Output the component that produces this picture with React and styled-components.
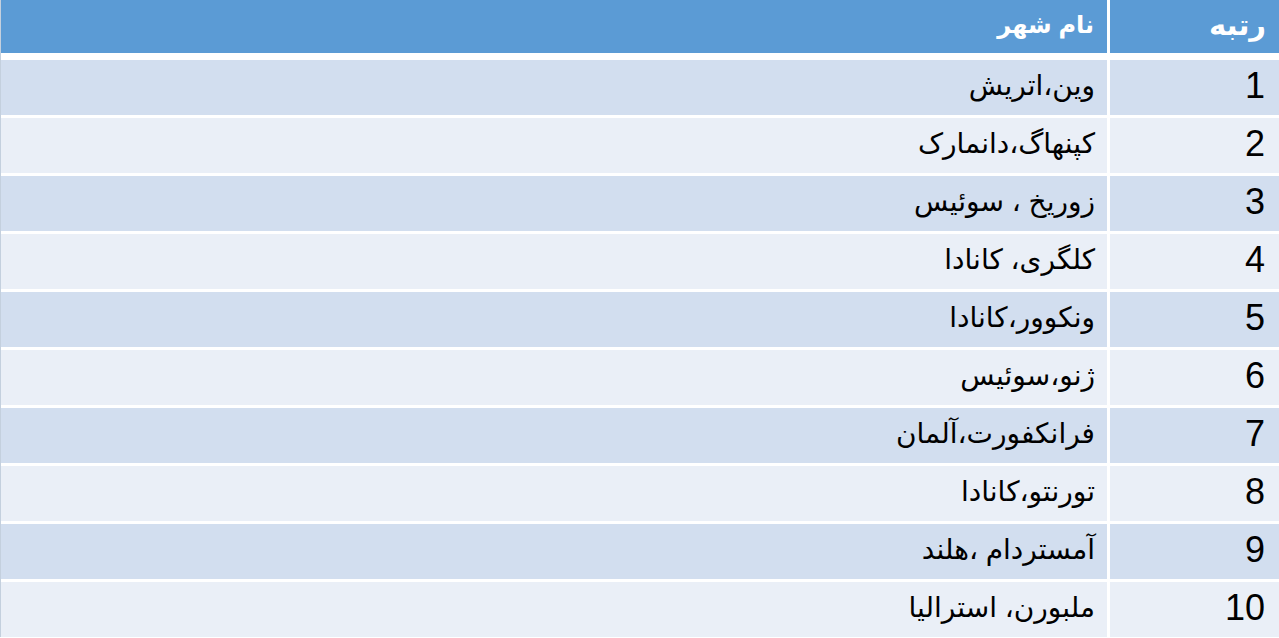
import React from 'react';
import styled, { createGlobalStyle } from 'styled-components';

const cities = [
    'وین،اتریش',
    'کپنهاگ،دانمارک',
    'زوریخ ، سوئیس',
    'کلگری، کانادا',
    'ونکوور،کانادا',
    'ژنو،سوئیس',
    'فرانکفورت،آلمان',
    'تورنتو،کانادا',
    'آمستردام ،هلند',
    'ملبورن، استرالیا',
];

const GlobalStyle = createGlobalStyle`
    html, body {
        margin: 0;
        padding: 0;
        background: #ffffff;
    }
    body {
        font-family: "Liberation Sans", "DejaVu Sans", Arial, sans-serif;
    }
`;

const App = () => {
    return (<Page>
        <GlobalStyle />
        <Table dir="rtl">
            <HeaderRow>
                <HeadCell size={29}>رتبه</HeadCell>
                <HeadCell size={24}>نام شهر</HeadCell>
            </HeaderRow>
            {
                cities.map((city, i) => {
                    return <Row key={city} shade={i % 2 === 0 ? 'dark' : 'light'}>
                        <RankCell>{i + 1}</RankCell>
                        <CityCell>{city}</CityCell>
                    </Row>
                })
            }
        </Table>
    </Page>);
}

export default App;


const Page = styled.div`
    width: 1279px;
    height: 638px;
    overflow: hidden;
    background: #ffffff;
`

const Table = styled.div`
    display: flex;
    flex-direction: column;
    gap: 3px;
    border-left: 1px solid #c4d0de;
`

const HeaderRow = styled.div`
    display: grid;
    grid-template-columns: 169px 1fr;
    column-gap: 3px;
    height: 53px;
    margin-bottom: 4px;
    background: #ffffff;
`

const HeadCell = styled.div`
    display: flex;
    align-items: center;
    padding: 0 13px 4px;
    background: #5b9bd5;
    color: #ffffff;
    font-weight: bold;
    font-size: ${props => props.size}px;
`

const Row = styled.div`
    display: grid;
    grid-template-columns: 169px 1fr;
    column-gap: 3px;
    height: 55px;
    & > div {
        background: ${props => props.shade === 'dark' ? '#d2deef' : '#eaeff7'};
    }
`

const RankCell = styled.div`
    display: flex;
    align-items: center;
    padding: 0 14px 4px;
    font-size: 36px;
    color: #000000;
`

const CityCell = styled.div`
    display: flex;
    align-items: center;
    padding: 0 12px 4px;
    font-size: 28px;
    color: #000000;
`
